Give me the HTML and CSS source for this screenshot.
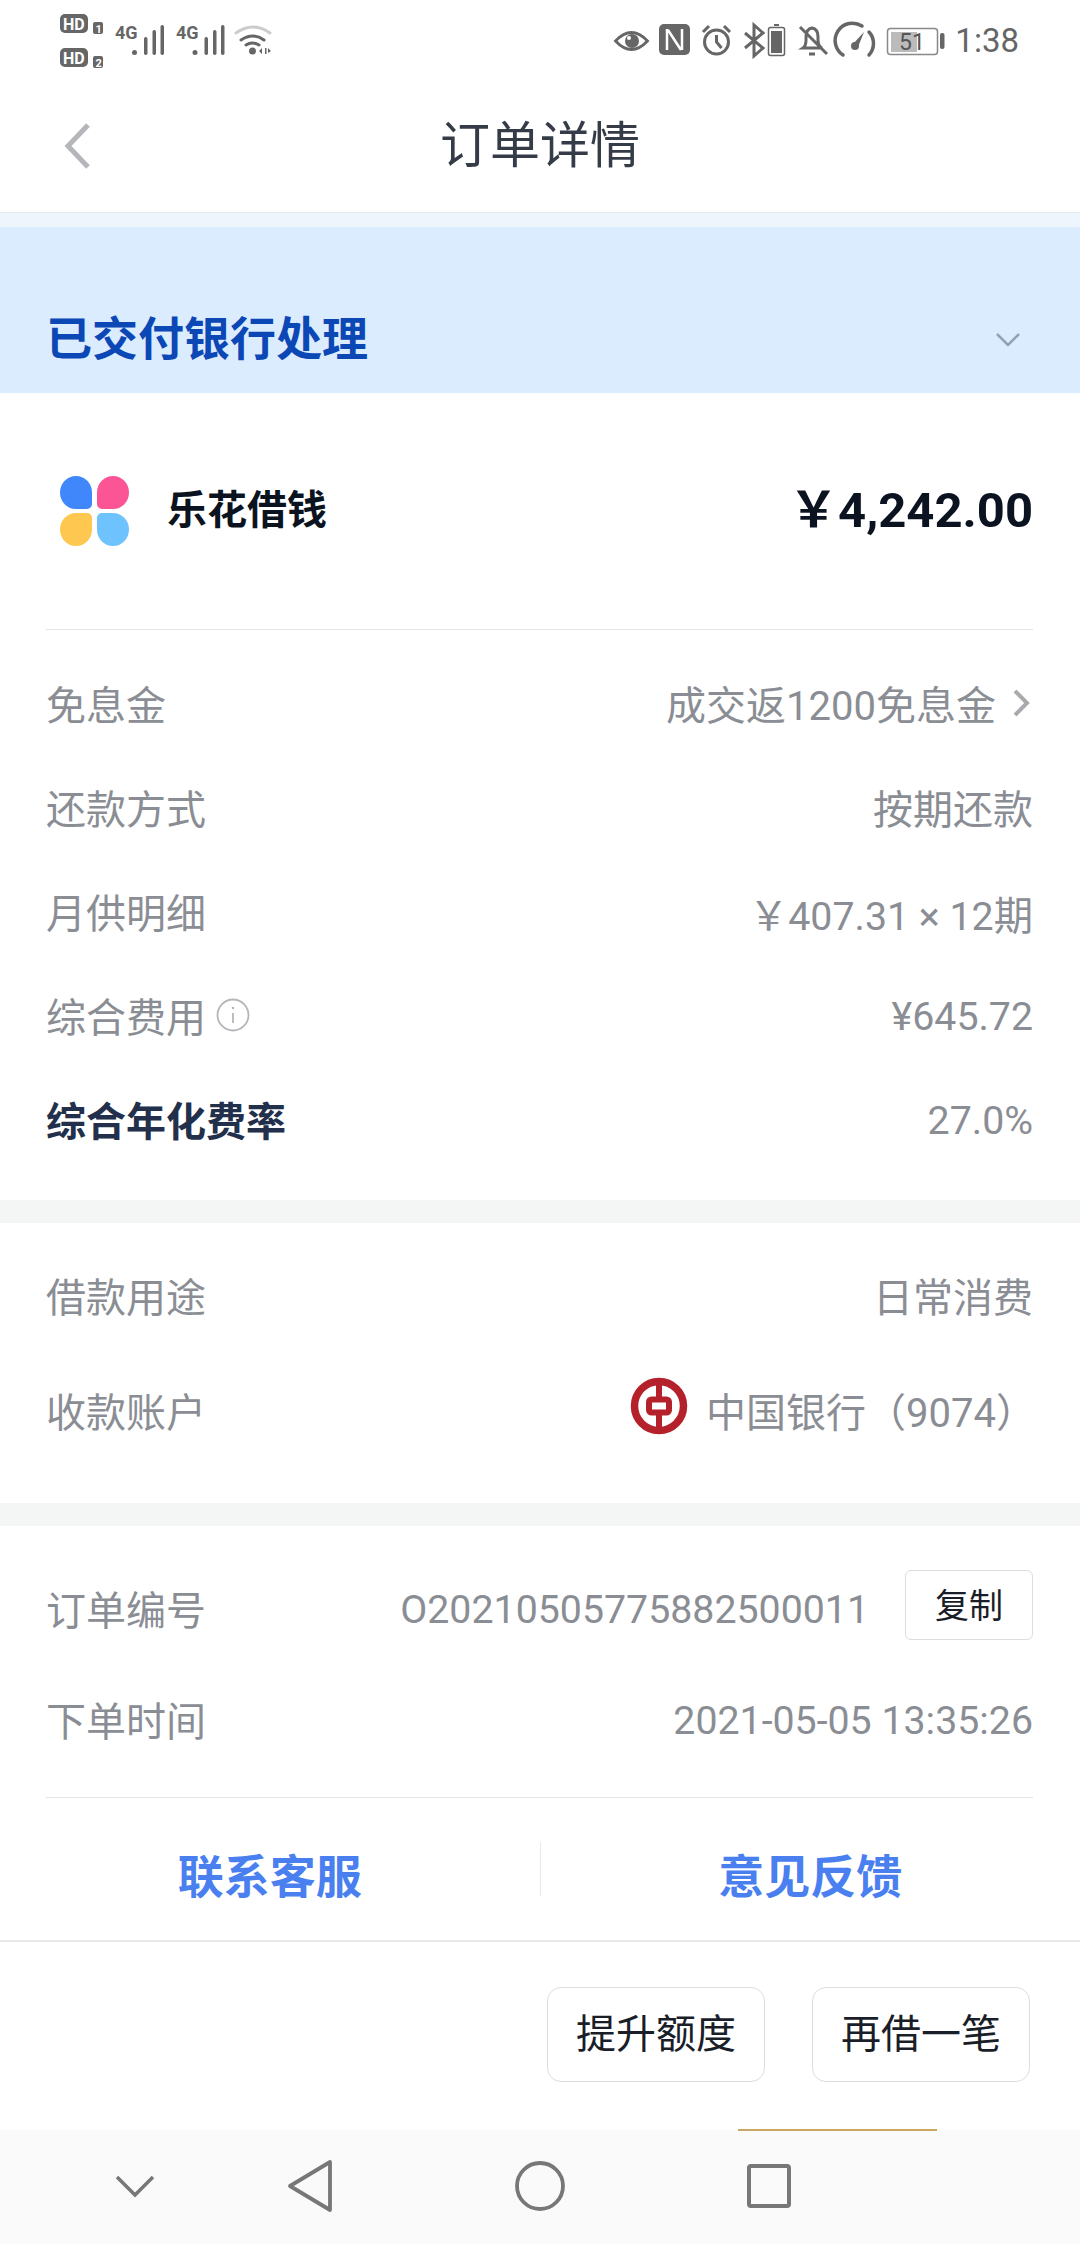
FILE: index.html
```html
<!DOCTYPE html>
<html lang="zh-CN">
<head>
<meta charset="utf-8">
<title>订单详情</title>
<link rel="stylesheet" href="styles.css">
</head>
<body>
<div class="page">
  <header class="top">
    <div class="status">
      <svg class="st-left" width="220" height="60" viewBox="58 10 220 60">
        <g fill="#666">
          <rect x="60" y="14" width="28" height="19" rx="5"/>
          <rect x="60" y="48" width="28" height="19" rx="5"/>
          <rect x="93" y="22" width="10" height="12" rx="2"/>
          <rect x="93" y="56" width="10" height="12" rx="2"/>
        </g>
        <g class="t-hd"><text x="63" y="29.500">HD</text><text x="63" y="63.500">HD</text></g>
        <g class="t-sim"><text x="95.500" y="32.500">1</text><text x="95.500" y="66.500">2</text></g>
        <g class="t-4g"><text x="115" y="38.500">4G</text><text x="176" y="38.500">4G</text></g>
        <g fill="#666">
          <circle cx="134.500" cy="52.500" r="2.500"/><rect x="144" y="37" width="3.500" height="18" rx="1.700"/><rect x="152.500" y="30" width="3.500" height="25" rx="1.700"/><rect x="160.500" y="25" width="3.500" height="30" rx="1.700"/>
          <circle cx="195" cy="52.500" r="2.500"/><rect x="204.500" y="37" width="3.500" height="18" rx="1.700"/><rect x="213" y="30" width="3.500" height="25" rx="1.700"/><rect x="221" y="25" width="3.500" height="30" rx="1.700"/>
          <circle cx="252.500" cy="51" r="3.500"/>
          <path d="M262 48v6l-3-3zM265 48v6h1.500v-6zM268 48l3 3-3 2z"/>
        </g>
        <g fill="none" stroke-linecap="round">
          <path d="M236 33q17-12 34 0" stroke="#ccc" stroke-width="3"/>
          <path d="M241 40q12-8 23 0" stroke="#666" stroke-width="3"/>
          <path d="M246 45q6-4 13 0" stroke="#666" stroke-width="3"/>
        </g>
      </svg>
      <div class="st-right">
        <svg width="340" height="40" viewBox="610 20 340 40">
          <g fill="none" stroke="#666">
            <path d="M617.500 41q16-17 32 0q-16 17-32 0z" stroke-width="2.800"/>
            <path d="M747 33l18 15-9 8V25l9 8-18 15" stroke-width="3"/>
            <circle cx="718.500" cy="42" r="12" stroke-width="3"/>
            <path d="M718.500 35v7l5 6" stroke-width="3"/>
            <path d="M705 32l6-6M732 32l-6-6" stroke-width="3"/>
            <path d="M805 48q3-2 3-8v-3q0-8 6-9 6 1 6 9v3q0 6 4 8zM802 27l27 27M811 54h6" stroke-width="3"/>
            <path d="M845 55a17 17 0 0 1 19-29M871 32a17 17 0 0 1 0 23" stroke-width="3.500" stroke-linecap="round"/>
            <rect x="889.500" y="28.500" width="50" height="26" rx="3" stroke="#888" stroke-width="1.500"/>
            <rect x="770.500" y="27.500" width="16" height="28" rx="2" stroke-width="1.500"/>
          </g>
          <g fill="#666">
            <circle cx="634" cy="41" r="7"/>
            <rect x="661" y="24" width="31" height="31" rx="5"/>
            <rect x="773" y="31" width="11" height="22"/>
            <rect x="776" y="24" width="5" height="2"/>
            <circle cx="857" cy="46" r="4"/>
            <path d="M855 44l11-12 -6 15z"/>
            <rect x="942" y="33" width="4.500" height="16" rx="2"/>
          </g>
          <path d="M669 29v21M684 29v21M670 30l13 20" fill="none" stroke="#fff" stroke-width="2.500"/>
          <circle cx="631" cy="38" r="2" fill="#fff"/>
          <rect x="893" y="32" width="26" height="20" fill="#bbb"/>
          <text class="t-batt" x="901" y="50">51</text>
        </svg>
        <span class="clock">1:38</span>
      </div>
    </div>
    <div class="title-bar">
      <svg class="back" width="30" height="48" viewBox="0 0 30 48"><path d="M26 3L6 24l20 21" fill="none" stroke="#b4b6ba" stroke-width="5"/></svg>
      <h1 class="title">订单详情</h1>
    </div>
  </header>

  <div class="tint"></div>
  <section class="banner">
    <span class="banner-text">已交付银行处理</span>
    <svg class="banner-chev" width="26" height="16" viewBox="0 0 26 16"><path d="M2 2l11 11L24 2" fill="none" stroke="#8fa3b8" stroke-width="2.500"/></svg>
  </section>

  <section class="block">
    <div class="product">
      <div class="product-name">
        <div class="logo"><i class="p blue"></i><i class="p pink"></i><i class="p yellow"></i><i class="p sky"></i></div>
        <span class="name">乐花借钱</span>
      </div>
      <span class="amount">￥4,242.00</span>
    </div>
    <div class="rule"></div>
    <div class="rows">
      <div class="row"><span>免息金</span><span class="val">成交返1200免息金<svg class="chev" width="20" height="30" viewBox="0 0 20 30"><path d="M3 3l12 12L3 27" fill="none" stroke="#a8aaae" stroke-width="4"/></svg></span></div>
      <div class="row"><span>还款方式</span><span>按期还款</span></div>
      <div class="row"><span>月供明细</span><span class="num">￥407.31 × 12期</span></div>
      <div class="row"><span class="info">综合费用<svg width="34" height="34" viewBox="0 0 34 34"><circle cx="17" cy="17" r="15.500" fill="none" stroke="#b4b6ba" stroke-width="1.800"/><path d="M17 15v10" stroke="#b4b6ba" stroke-width="1.800"/><circle cx="17" cy="10" r="1.300" fill="#b4b6ba"/></svg></span><span class="num">¥645.72</span></div>
      <div class="row"><span class="strong">综合年化费率</span><span class="num">27.0%</span></div>
    </div>
  </section>

  <div class="band"></div>

  <section class="block r2">
    <div class="row"><span>借款用途</span><span>日常消费</span></div>
    <div class="row tall"><span>收款账户</span>
      <span class="bank">
        <svg width="58" height="58" viewBox="0 0 58 58"><circle cx="29" cy="29" r="24.500" fill="none" stroke="#b5212a" stroke-width="7.500"/><rect x="19" y="22.500" width="20" height="13" rx="2.500" fill="none" stroke="#b5212a" stroke-width="6"/><path d="M29 3v17M29 38v17" stroke="#b5212a" stroke-width="6"/></svg>
        <span>中国银行（9074）</span>
      </span>
    </div>
  </section>

  <div class="band"></div>

  <section class="block r3">
    <div class="row"><span>订单编号</span>
      <span class="order"><span class="num">O20210505775882500011</span><button class="copy">复制</button></span>
    </div>
    <div class="row"><span>下单时间</span><span class="num">2021-05-05 13:35:26</span></div>
    <div class="rule low"></div>
  </section>

  <section class="links">
    <a class="link">联系客服</a>
    <a class="link sep">意见反馈</a>
  </section>

  <section class="footer">
    <button class="act">提升额度</button>
    <button class="act">再借一笔</button>
  </section>

  <nav class="nav">
    <i class="gold"></i>
    <svg width="42" height="24" viewBox="0 0 42 24"><path d="M3 3l18 18L39 3" fill="none" stroke="#777" stroke-width="3.500"/></svg>
    <svg width="48" height="54" viewBox="0 0 48 54"><path d="M44 3v48L4 27z" fill="none" stroke="#777" stroke-width="3.800" stroke-linejoin="round"/></svg>
    <svg width="52" height="52" viewBox="0 0 52 52"><circle cx="26" cy="26" r="23" fill="none" stroke="#777" stroke-width="3.800"/></svg>
    <svg width="46" height="46" viewBox="0 0 46 46"><rect x="3" y="3" width="40" height="40" rx="2" fill="none" stroke="#777" stroke-width="4"/></svg>
  </nav>
</div>
</body>
</html>
```
FILE: styles.css
```css
* { box-sizing: border-box; margin: 0; padding: 0; }
html, body { background: #fff; }
body { font-family: Roboto, "Noto Sans CJK SC", sans-serif; color: #8a8e94; font-size: 40px; }
.page { width: 1080px; height: 2244px; overflow: hidden; display: flex; flex-direction: column; }

.top { height: 213px; border-bottom: 1px solid #e6e9ee; }
.status { height: 80px; padding: 10px 61px 0 58px; display: flex; justify-content: space-between; }
.st-right { display: flex; align-items: flex-start; gap: 7px; padding-top: 10px; }
.clock { font-size: 33px; line-height: 40px; color: #666; margin-top: 1px; }
.t-hd text { font: 700 16px Roboto, sans-serif; fill: #fff; }
.t-sim text { font: 700 11px Roboto, sans-serif; fill: #fff; }
.t-4g text { font: 700 18px "Liberation Sans Narrow", Roboto, sans-serif; fill: #666; }
.t-batt { font: 400 23px Roboto, sans-serif; fill: #555; }

.title-bar { height: 132px; display: flex; align-items: center; justify-content: center; position: relative; }
.back { position: absolute; left: 62px; top: 42px; }
.title { font-size: 50px; font-weight: 400; color: #353c48; line-height: 60px; }

.tint { height: 14px; background: #eff5fd; }
.banner { height: 166px; background: #dbecff; display: flex; justify-content: space-between; align-items: center; padding: 58px 59px 0 46px; }
.banner-text { font-size: 46px; font-weight: 700; color: #0b47b5; line-height: 56px; }
.banner-chev { margin-top: 2px; }

.block { background: #fff; }
.product { height: 236px; margin: 0 47px 0 60px; display: flex; align-items: center; justify-content: space-between; }
.product-name { display: flex; align-items: center; gap: 38px; }
.logo { display: grid; grid-template-columns: 32px 32px; grid-template-rows: 33px 33px; gap: 4px 5px; }
.p { display: block; }
.blue { background: #3f87fb; border-radius: 50% 50% 5px 50%; }
.pink { background: #fb5595; border-radius: 50% 50% 50% 5px; }
.yellow { background: #fec850; border-radius: 50% 5px 50% 50%; }
.sky { background: #6ec3fe; border-radius: 5px 50% 50% 50%; }
.name { font-size: 40px; font-weight: 700; color: #0c1320; margin-bottom: 8px; }
.amount { font-size: 49px; font-weight: 700; color: #0c1320; margin-bottom: 12px; }

.rule { height: 1px; margin: 0 47px 0 46px; background: #e2e4e7; }
.rows { padding: 21px 47px 29px 46px; }
.row { height: 104px; display: flex; justify-content: space-between; align-items: center; }
.num { font-size: 39.3px; margin-top: 3px; }
.val { display: flex; align-items: center; gap: 16px; margin-right: 1px; }
.info { display: flex; align-items: center; gap: 10px; }
.strong { font-weight: 700; color: #22304c; }

.band { height: 23px; background: #f4f6f6; }

.r2 { padding: 20px 47px 30px 46px; }
.tall { height: 126px; }
.bank { display: flex; align-items: center; gap: 18px; margin-right: -3px; }
.bank svg { margin-top: -8px; }

.r3 { padding: 30px 47px 0 46px; }
.r3 .row + .row { margin-top: 7px; }
.r3 .rule { margin: 26px 0 0; }
.order { display: flex; align-items: center; gap: 36px; }
.copy { width: 128px; height: 70px; margin-top: -6px; padding-bottom: 4px; background: #fff; border: 1px solid #dcdde0; border-radius: 6px; font: 400 34px Roboto, "Noto Sans CJK SC", sans-serif; color: #1a1e28; }

.links { height: 144px; display: flex; align-items: center; border-bottom: 2px solid #e9e9eb; }
.link { flex: 1; height: 54px; padding-top: 8px; display: flex; align-items: center; justify-content: center; font-size: 46px; font-weight: 700; color: #4a7ff0; }
.sep { border-left: 1px solid #e9e9eb; }

.footer { height: 188px; padding: 45px 50px 0 0; display: flex; justify-content: flex-end; align-items: flex-start; gap: 47px; }
.act { width: 218px; height: 95px; padding-bottom: 8px; background: #fff; border: 1px solid #dcdde0; border-radius: 14px; font: 400 40px Roboto, "Noto Sans CJK SC", sans-serif; color: #1a1e28; }

.nav { position: relative; flex: 1; background: #fafafa; display: grid; grid-template-columns: 270px 80px 380px 78px; justify-content: start; justify-items: center; align-items: center; padding-bottom: 2px; }
.gold { position: absolute; left: 738px; top: -1px; width: 199px; height: 2px; background: #c9a866; }
```
